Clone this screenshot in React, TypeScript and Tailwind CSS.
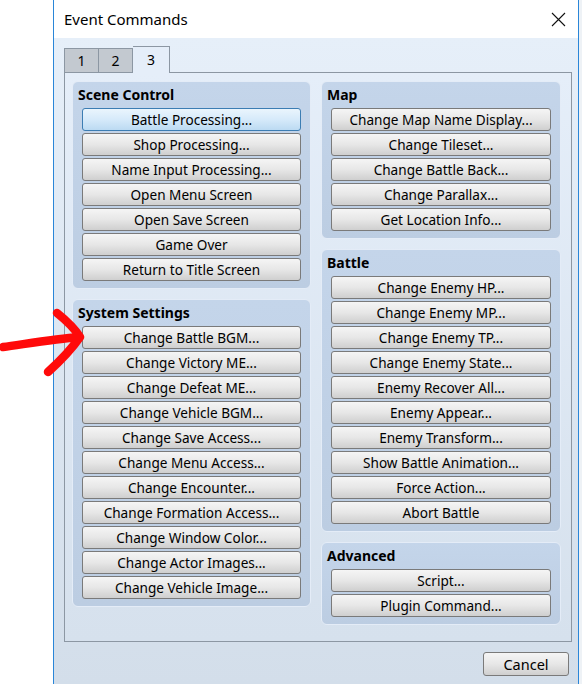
import React from 'react'

type Group = { title: string; items: string[]; focused?: string }

const leftGroups: Group[] = [
  {
    title: 'Scene Control',
    focused: 'Battle Processing...',
    items: [
      'Battle Processing...',
      'Shop Processing...',
      'Name Input Processing...',
      'Open Menu Screen',
      'Open Save Screen',
      'Game Over',
      'Return to Title Screen',
    ],
  },
  {
    title: 'System Settings',
    items: [
      'Change Battle BGM...',
      'Change Victory ME...',
      'Change Defeat ME...',
      'Change Vehicle BGM...',
      'Change Save Access...',
      'Change Menu Access...',
      'Change Encounter...',
      'Change Formation Access...',
      'Change Window Color...',
      'Change Actor Images...',
      'Change Vehicle Image...',
    ],
  },
]

const rightGroups: Group[] = [
  {
    title: 'Map',
    items: [
      'Change Map Name Display...',
      'Change Tileset...',
      'Change Battle Back...',
      'Change Parallax...',
      'Get Location Info...',
    ],
  },
  {
    title: 'Battle',
    items: [
      'Change Enemy HP...',
      'Change Enemy MP...',
      'Change Enemy TP...',
      'Change Enemy State...',
      'Enemy Recover All...',
      'Enemy Appear...',
      'Enemy Transform...',
      'Show Battle Animation...',
      'Force Action...',
      'Abort Battle',
    ],
  },
  {
    title: 'Advanced',
    items: ['Script...', 'Plugin Command...'],
  },
]

function CmdButton({ label, focused }: { label: string; focused?: boolean }) {
  return (
    <button
      className={`h-[23px] w-full rounded-[3px] border text-[13.6px] leading-[20px] text-black ${
        focused
          ? 'border-[#3c7db3] bg-gradient-to-b from-[#eaf5fd] via-[#d6eafa] to-[#bcdaf2]'
          : 'border-[#7a7a7a] bg-gradient-to-b from-[#f5f5f5] via-[#e7e7e7] to-[#cfcfcf]'
      }`}
    >
      {label}
    </button>
  )
}

function GroupBox({ group }: { group: Group }) {
  return (
    <div className="rounded-[6px] border border-[#e4ecf7] bg-gradient-to-b from-[#c4d5ea] to-[#bccde2] px-[9px] pb-[7px]">
      <div className="-ml-[4px] h-[26px] pt-[4px] text-[14px] font-bold leading-[17px] text-black">
        {group.title}
      </div>
      <div className="flex flex-col gap-[2px]">
        {group.items.map((it) => (
          <CmdButton key={it} label={it} focused={it === group.focused} />
        ))}
      </div>
    </div>
  )
}

export default function App() {
  return (
    <div
      className="relative flex h-[684px] w-[582px] overflow-hidden bg-white"
      style={{ fontFamily: '"Noto Sans", "Open Sans", sans-serif' }}
    >
      <div className="w-[53px] shrink-0 bg-white" />

      {/* dialog window */}
      <div className="flex w-[526px] shrink-0 flex-col border-x border-[#2a86d8]">
        <div className="flex h-[38px] shrink-0 items-center justify-between bg-white pl-[10px] pr-[12px]">
          <span className="text-[15px] text-black">Event Commands</span>
          <svg width="15" height="15" viewBox="0 0 15 15" className="mt-[1px]">
            <path d="M1 1 L14 14 M14 1 L1 14" stroke="#111" strokeWidth="1.1" fill="none" />
          </svg>
        </div>

        <div className="flex flex-1 flex-col bg-gradient-to-b from-[#e6eff9] to-[#d3deea] pl-[10px] pr-[6px] pt-[8px]">
          {/* tabs */}
          <div className="flex h-[26px] items-end">
            <div className="flex h-[24px] w-[35px] items-center justify-center border border-b-0 border-[#8c97a3] bg-[#c3c9d0] text-[14px] text-black">
              1
            </div>
            <div className="flex h-[24px] w-[34px] items-center justify-center border border-b-0 border-l-0 border-[#8c97a3] bg-[#c3c9d0] text-[14px] text-black">
              2
            </div>
            <div className="relative z-10 -mb-px flex h-[27px] w-[37px] items-center justify-center border border-b-0 border-l-0 border-[#8c97a3] bg-[#e5eef9] pb-[2px] text-[14px] text-black">
              3
            </div>
          </div>

          {/* tab page */}
          <div className="flex h-[570px] gap-[10px] border border-[#8c97a3] bg-gradient-to-b from-[#e5eef9] to-[#d6e1ed] pl-[7px] pr-[10px] pt-[8px]">
            <div className="flex w-[239px] flex-col gap-[10px]">
              {leftGroups.map((g) => (
                <GroupBox key={g.title} group={g} />
              ))}
            </div>
            <div className="flex w-[240px] flex-col gap-[10px]">
              {rightGroups.map((g) => (
                <GroupBox key={g.title} group={g} />
              ))}
            </div>
          </div>

          <div className="mt-[10px] flex justify-end pr-[3px]">
            <button className="h-[24px] w-[86px] rounded-[3px] border border-[#7a7a7a] bg-gradient-to-b from-[#f5f5f5] via-[#e7e7e7] to-[#cfcfcf] text-[14.5px] leading-[22px] text-black">
              Cancel
            </button>
          </div>
        </div>
      </div>

      <div className="w-[3px] shrink-0 bg-[#eef2f6]" />

      {/* red marker arrow */}
      <svg className="pointer-events-none absolute left-0 top-[300px]" width="100" height="90" viewBox="0 0 100 90">
        <path
          d="M3 47 C 25 44, 55 39, 79 37 M57 13 C 67 21, 75 29, 80 37 C 71 50, 59 62, 48 72"
          stroke="#ff0a0a"
          strokeWidth="8.5"
          strokeLinecap="round"
          strokeLinejoin="round"
          fill="none"
        />
      </svg>
    </div>
  )
}
